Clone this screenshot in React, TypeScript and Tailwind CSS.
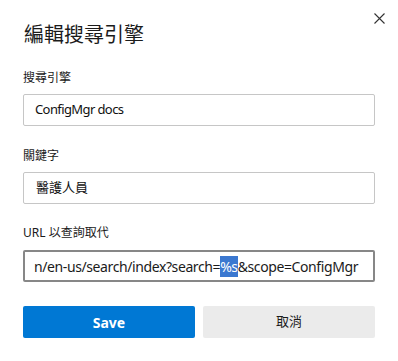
import React from "react";

const font = { fontFamily: '"Noto Sans", "Noto Sans CJK TC", sans-serif' };

function Field({ label, children, mt }: { label: string; children: React.ReactNode; mt: string }) {
  return (
    <div className={mt}>
      <label className="block text-[12px] leading-[16px] text-[#1b1b1b]">{label}</label>
      {children}
    </div>
  );
}

export default function App() {
  return (
    <div
      className="relative w-[398px] h-[361px] bg-white px-[23px] pt-[21px] overflow-hidden"
      style={font}
    >
      <button className="absolute right-[12px] top-[11px] w-[14px] h-[14px] flex items-center justify-center text-[#333]">
        <svg width="11" height="11" viewBox="0 0 11 11" fill="none" stroke="currentColor" strokeWidth="1.1">
          <path d="M0.5 0.5 L10.5 10.5 M10.5 0.5 L0.5 10.5" />
        </svg>
      </button>

      <h1 className="text-[20px] leading-[28px] font-normal text-[#1b1b1b] pl-[1px]">編輯搜尋引擎</h1>

      <Field label="搜尋引擎" mt="mt-[21px]">
        <div className="mt-[8px] h-[32px] border border-[#c6c6c6] rounded-[2px] flex items-center pl-[11px] text-[13px] text-[#111] tracking-[-0.6px]">
          ConfigMgr docs
        </div>
      </Field>

      <Field label="關鍵字" mt="mt-[22px]">
        <div className="mt-[8px] h-[32px] border border-[#c6c6c6] rounded-[2px] flex items-center pl-[12px] text-[13px] text-[#111]">
          醫護人員
        </div>
      </Field>

      <Field label="URL 以查詢取代" mt="mt-[21px]">
        <div className="mt-[9px] h-[32px] border-2 border-[#878787] rounded-[2px] flex items-center pl-[9px] text-[14px] tracking-[-0.4px] text-[#1b1b1b] whitespace-nowrap overflow-hidden">
          n/en-us/search/index?search=
          <span className="bg-[#3b78d0] text-white">%s</span>
          &amp;scope=ConfigMgr
        </div>
      </Field>

      <div className="mt-[24px] flex gap-[8px]">
        <button className="flex-1 h-[32px] rounded-[2px] bg-[#0078d4] text-white text-[14px] font-bold">
          Save
        </button>
        <button className="flex-1 h-[32px] rounded-[2px] bg-[#ebebeb] text-[#1b1b1b] text-[13px]">
          取消
        </button>
      </div>
    </div>
  );
}
